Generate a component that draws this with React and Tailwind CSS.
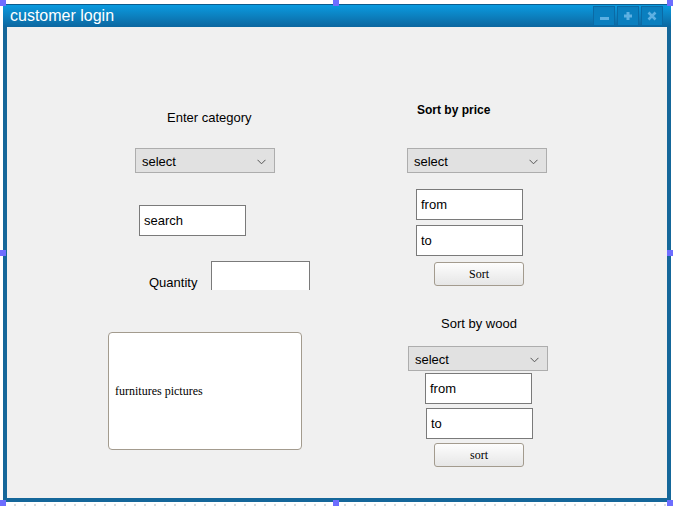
import React from "react";

function Select({ className = "" }) {
  return (
    <div
      className={`flex items-center justify-between w-[140px] h-[25px] bg-[#e1e1e1] border border-[#adadad] pl-[6px] pr-[8px] pt-[2px] text-[13px] text-black ${className}`}
    >
      <span>select</span>
      <svg width="9" height="6" viewBox="0 0 9 6" fill="none">
        <path d="M0.5 0.8 L4.5 4.8 L8.5 0.8" stroke="#555" strokeWidth="1" />
      </svg>
    </div>
  );
}

function TextBox({ text, className = "" }) {
  return (
    <div
      className={`flex items-center w-[107px] h-[31px] bg-white border border-[#7a7a7a] pl-[4px] text-[13px] text-black ${className}`}
    >
      {text}
    </div>
  );
}

function Button({ label, className = "" }) {
  return (
    <div
      className={`flex items-center justify-center w-[90px] h-[24px] rounded-[3px] border border-[#a39b8e] bg-gradient-to-b from-[#fdfdfd] to-[#e6e6e6] text-[12px] text-black font-['Liberation_Serif',serif] ${className}`}
    >
      {label}
    </div>
  );
}

function Handle({ className }) {
  return <div className={`absolute w-[6px] h-[6px] bg-[#6e6eff] ${className}`} />;
}

export default function App() {
  return (
    <div className="relative w-[673px] h-[506px] overflow-hidden bg-white font-['Liberation_Sans',Arial,sans-serif] bg-[radial-gradient(circle,#dcdcdc_1px,transparent_1.2px)] bg-[length:10px_10px]">
      {/* window */}
      <div className="ml-[3px] pt-[4px]">
        <div className="w-[668px] h-[498px] flex flex-col bg-[#15679a] px-[4px] pb-[4px]">
          {/* title bar */}
          <div className="-mx-[4px] h-[23px] flex items-center justify-between border-t border-[#0b5c8e] bg-gradient-to-b from-[#0a9be0] to-[#0c67a0] pl-[7px] pr-[8px]">
            <span className="text-white text-[16px] leading-none">customer login</span>
            <div className="flex gap-[2px] self-stretch py-[1px]">
              <div className="w-[22px] flex items-center justify-center bg-[#0a7fbf] border border-[#0b6aa5]">
                <div className="w-[9px] h-[3px] mt-[4px] bg-[#5eb0e2]" />
              </div>
              <div className="w-[22px] flex items-center justify-center bg-[#0a7fbf] border border-[#0b6aa5]">
                <svg width="10" height="10" viewBox="0 0 10 10">
                  <path d="M5 1 V9 M1 5 H9" stroke="#5eb0e2" strokeWidth="3" />
                </svg>
              </div>
              <div className="w-[22px] flex items-center justify-center bg-[#0a7fbf] border border-[#0b6aa5]">
                <svg width="10" height="10" viewBox="0 0 10 10">
                  <path d="M1.5 1.5 L8.5 8.5 M8.5 1.5 L1.5 8.5" stroke="#5eb0e2" strokeWidth="2.6" />
                </svg>
              </div>
            </div>
          </div>

          {/* form content */}
          <div className="flex-1 flex bg-[#f0f0f0] text-[13px] text-black">
            {/* left column */}
            <div className="w-[390px] flex flex-col items-start">
              <div className="ml-[160px] mt-[83px] leading-4">Enter category</div>
              <Select className="ml-[128px] mt-[22px]" />
              <TextBox text="search" className="ml-[132px] mt-[32px]" />
              <div className="ml-[142px] mt-[25px] flex h-[29px]">
                <span className="mt-[14px] leading-4">Quantity</span>
                <div className="ml-[14px] w-[99px] bg-white border-t border-x border-[#7a7a7a]" />
              </div>
              <div className="ml-[101px] mt-[42px] w-[194px] h-[118px] flex items-center bg-white border border-[#a39b8e] rounded-[4px] pl-[6px] font-['Liberation_Serif',serif] text-[12px]">
                furnitures pictures
              </div>
            </div>

            {/* right column */}
            <div className="flex-1 flex flex-col items-start">
              <div className="ml-[20px] mt-[75px] leading-4 font-bold text-[12px]">Sort by price</div>
              <Select className="ml-[10px] mt-[30px]" />
              <TextBox text="from" className="ml-[19px] mt-[16px]" />
              <TextBox text="to" className="ml-[19px] mt-[5px]" />
              <Button label="Sort" className="ml-[37px] mt-[6px]" />
              <div className="ml-[44px] mt-[30px] leading-4">Sort by wood</div>
              <Select className="ml-[11px] mt-[14px]" />
              <TextBox text="from" className="ml-[28px] mt-[2px]" />
              <TextBox text="to" className="ml-[29px] mt-[4px]" />
              <Button label="sort" className="ml-[37px] mt-[4px]" />
            </div>
          </div>
        </div>
      </div>

      {/* designer resize handles */}
      <Handle className="left-0 top-0" />
      <Handle className="left-[333px] top-0" />
      <Handle className="right-0 top-0" />
      <Handle className="left-0 top-[250px]" />
      <Handle className="right-0 top-[250px]" />
      <Handle className="left-0 bottom-0" />
      <Handle className="left-[333px] bottom-0" />
      <Handle className="right-0 bottom-0" />
    </div>
  );
}
